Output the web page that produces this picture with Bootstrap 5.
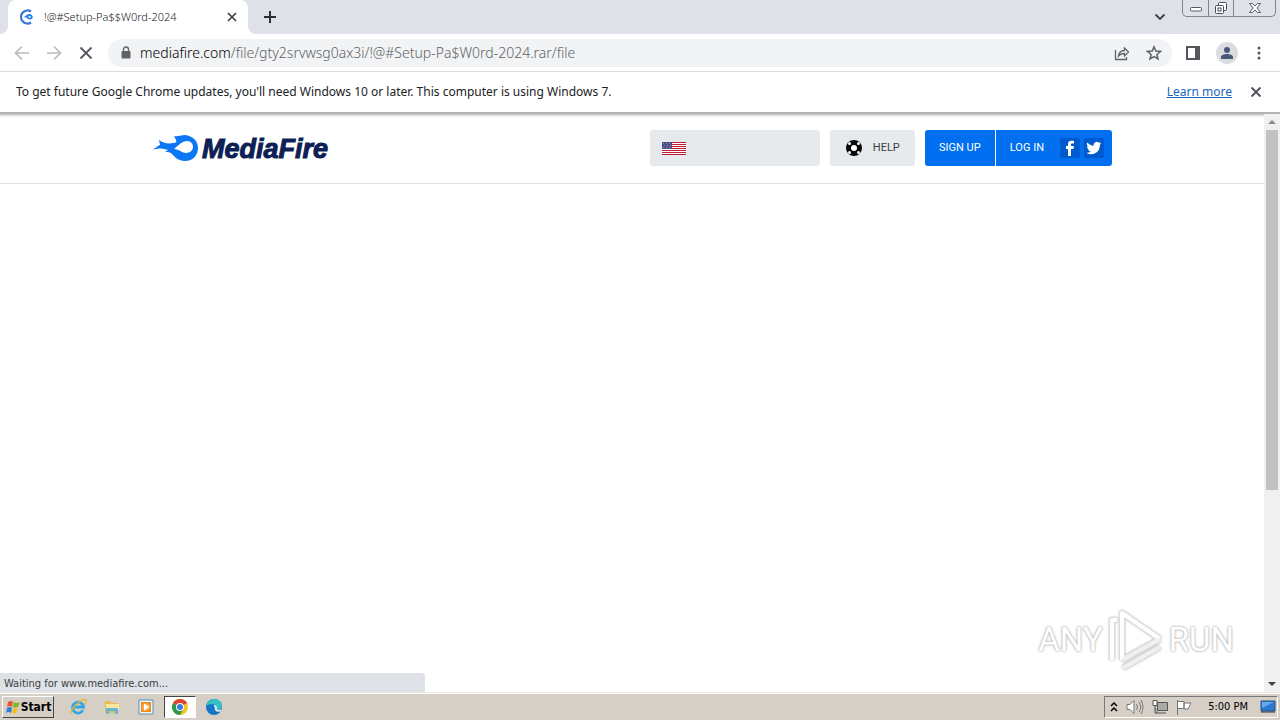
<!DOCTYPE html>
<html lang="en">
<head>
<meta charset="utf-8">
<meta name="viewport" content="width=device-width, initial-scale=1">
<title>!@#Setup-Pa$$W0rd-2024</title>
<link href="https://cdn.jsdelivr.net/npm/bootstrap@5.3.0/dist/css/bootstrap.min.css" rel="stylesheet">
<style>
body{font-family:"DejaVu Sans Condensed","DejaVu Sans",sans-serif;font-size:11px;line-height:16px;color:#202124}
button{border:0;background:none;padding:0;color:#5f6368;display:flex;align-items:center;justify-content:center}
svg{display:block;flex:none}
.tabstrip{height:34px;background:#dee1e8}
.tab-edge{width:8px;background:#fff}
.tab-edge i{display:block;height:100%;background:#dee1e8}
.edge-left i{border-bottom-right-radius:8px}
.edge-right i{border-bottom-left-radius:8px}
.tab-open{width:240px;background:#fff;border-radius:8px 8px 0 0;padding:0 8px 0 12px}
.tab-title{font-family:"Noto Sans",sans-serif;font-weight:300;font-size:11px;padding-left:2px}
.win-ctl{height:17px;border:1px solid #80848c;border-top:0;border-radius:0 0 5px 5px;margin-right:4px}
.win-ctl button{width:25px}
.win-ctl button+button{border-left:1px solid #80848c}
.win-ctl button:last-child{width:42px}
.toolbar{height:38px;border-bottom:1px solid #dadce0}
.omnibox{height:28px;border-radius:14px;background:#f1f3f4;padding:0 10px 0 12px;margin:0 14px 0 12px}
.url,.url-domain{font-family:"Noto Sans",sans-serif;font-weight:300;font-size:14px;line-height:20px}
.url-domain{color:#000}
.url{border:0;background:none;color:#5f6368;padding:0;outline:0;min-width:0}
.avatar{width:22px;height:22px;border-radius:50%;background:#dadce0}
.infobar{height:42px;border-bottom:2px solid #b4b4b4;padding:0 16px;font-family:"Noto Sans",sans-serif;font-size:12px}
.infobar a{color:#1a66b8}
.site-head{border-bottom:1px solid #e1e2e4;padding:16px 0 17px}
.site-wrap{max-width:960px;margin:0 auto}
.wordmark{font-family:"Liberation Sans",sans-serif;font-style:italic;font-weight:700;font-size:27px;line-height:38px;height:36px;color:#0d1f55;-webkit-text-stroke:1px #0d1f55}
.mf-btn{height:36px;font-family:Roboto,sans-serif;font-size:11px;line-height:18px;background:#e7eaec;color:#3c4046;border-radius:3px}
.mf-blue{background:#0070f0;color:#fff}
.lang{width:170px;justify-content:flex-start;padding-left:12px}
.help-btn{width:85px;margin:0 10px;gap:10px}
.signup{width:71px;border-right:1px solid #fff}
.login{padding:0 8px 0 14px}
.social{width:20px;height:20px;background:#0059cd;border-radius:2px}
.page-area{box-shadow:inset 0 3px 3px -2px #aaa}
.scroll-track{width:16px;background:#f1f1f1;padding:0 2px}
.scroll-track button{height:16px;width:12px}
.scroll-thumb{height:66%;background:#c1c1c1}
.status{left:0;bottom:0;width:425px;height:19px;background:#dee1e6;border-radius:0 4px 0 0;padding:3px 4px 0;color:#3c4043}
.brandmark{right:46px;bottom:20px;color:#fff;font-family:Roboto,sans-serif;font-size:33px;line-height:60px;text-shadow:0 0 2px #aaa,0 0 3px #bbb}
.brandmark svg{filter:drop-shadow(0 0 1px #bbb)}
.taskbar{height:28px;background:#d6cfc6;border-top:1px solid #e9e6e1;padding:3px 2px 2px;box-shadow:inset 0 1px #fff}
.start-btn{width:52px;height:22px;background:#d6cfc6;border:1px solid;border-color:#fff #444 #444 #fff;color:#000;font-weight:700;font-size:12px}
.tasks{gap:2px}
.task{width:32px;height:22px}
.task.active{border:1px solid;border-color:#444 #fff #fff #444;background:#fff}
.tray{border:1px solid;border-color:#777 #fff #fff #777;color:#000;height:22px;padding:0 1px 0 5px}
</style>
</head>
<body class="d-flex flex-column vh-100 overflow-hidden bg-white">
<header>
 <div class="tabstrip d-flex">
  <div class="tab-edge edge-left"><i></i></div>
  <div class="tab-open d-flex align-items-center">
   <svg width="14" height="16" viewBox="0 0 14 16"><path d="M11 2.500A6.500 6.500 0 1 0 11 13.500" fill="none" stroke="#3b78d0" stroke-width="2.300"/><path d="M3 8l2-.5c1.500-2 4-3 6-2 3 1.500 2 5-1 5-2 0-2-1-4-2z" fill="#2b83ea"/><path d="M8 8q2-2 3 0-1 1.500-3 0" fill="#fff"/></svg>
   <span class="tab-title ms-2 flex-grow-1">!@#Setup-Pa$$W0rd-2024</span>
   <button type="button" aria-label="Close tab"><svg width="16" height="16" viewBox="0 0 16 16" stroke="#3c4043" stroke-width="1.700"><path d="M4 4l8 8M12 4l-8 8"/></svg></button>
  </div>
  <div class="tab-edge edge-right"><i></i></div>
  <button type="button" class="ms-1" aria-label="New tab"><svg width="20" height="20" viewBox="0 0 20 20" stroke="#2c2f33" stroke-width="2"><path d="M4 10h12M10 4v12"/></svg></button>
  <button type="button" class="ms-auto me-3" aria-label="Search tabs"><svg width="12" height="12" viewBox="0 0 12 12" fill="none" stroke="#3c4043" stroke-width="1.800"><path d="M1.500 3.500L6 8l4.500-4.500"/></svg></button>
  <div class="win-ctl d-flex">
   <button type="button" aria-label="Minimize"><svg width="14" height="8" viewBox="0 0 14 8" fill="#fff" stroke="#555b65"><rect x="1.500" y="3.500" width="11" height="3.500" rx="1"/></svg></button>
   <button type="button" aria-label="Restore"><svg width="14" height="14" viewBox="0 0 14 14" fill="#fff" stroke="#454b55"><rect x="4.500" y="1.500" width="8" height="8" rx="1"/><rect x="1.500" y="4.500" width="8" height="8" rx="1"/><rect x="4" y="7" width="3" height="3"/></svg></button>
   <button type="button" aria-label="Close"><svg width="14" height="12" viewBox="0 0 14 12" fill="#fff" stroke="#555b65"><path d="M1.500 1.500h3L7 4l2.500-2.500h3L9 6l3.500 4.500h-3L7 8l-2.500 2.500h-3L5 6z"/></svg></button>
  </div>
 </div>
 <div class="toolbar d-flex align-items-center">
  <button type="button" class="ms-2 ps-1" aria-label="Back"><svg width="20" height="20" viewBox="0 0 20 20" fill="none" stroke="#b9bbbe" stroke-width="1.700"><path d="M17 10H4M10 3.500L3.500 10l6.500 6.500"/></svg></button>
  <button type="button" class="ms-2 ps-1" aria-label="Forward"><svg width="20" height="20" viewBox="0 0 20 20" fill="none" stroke="#b9bbbe" stroke-width="1.700"><path d="M3 10h13M10 3.500l6.500 6.500-6.500 6.500"/></svg></button>
  <button type="button" class="ms-2 ps-1" aria-label="Stop"><svg width="20" height="20" viewBox="0 0 20 20" fill="none" stroke="#54585d" stroke-width="1.800"><path d="M4.500 4.500l11 11M15.500 4.500l-11 11"/></svg></button>
  <div class="omnibox d-flex align-items-center flex-grow-1">
   <svg width="12" height="14" viewBox="0 0 12 14"><rect x="1.500" y="5" width="9" height="7.500" rx="1" fill="#5f6368"/><path d="M3.500 5V3.500a2.500 2.500 0 0 1 5 0V5" fill="none" stroke="#5f6368" stroke-width="1.400"/></svg>
   <label for="url" class="url-domain ms-2">mediafire.com</label><input id="url" class="url flex-grow-1" type="text" value="/file/gty2srvwsg0ax3i/!@#Setup-Pa$W0rd-2024.rar/file">
   <button type="button" class="me-3" aria-label="Share"><svg width="16" height="16" viewBox="0 0 16 16" fill="none" stroke="#5f6368" stroke-width="1.300"><path d="M1.500 5v9.500h11V12M4.500 11c.5-4 2.500-5.500 6-5.500V3l4 4-4 4V8.500c-3 0-4.500.5-6 2.500z"/></svg></button>
   <button type="button" aria-label="Bookmark"><svg width="16" height="16" viewBox="0 0 16 16" fill="none" stroke="#5f6368" stroke-width="1.500"><path d="M8 1.800l1.800 4.300 4.700.4-3.600 3 1.100 4.500L8 11.600 4 14l1.100-4.500-3.600-3 4.700-.4z"/></svg></button>
  </div>
  <button type="button" aria-label="Side panel"><svg width="14" height="14" viewBox="0 0 14 14"><rect x="1" y="1" width="12" height="12" fill="none" stroke="#54585d" stroke-width="2"/><path d="M9 1h4v12H9z" fill="#54585d"/></svg></button>
  <button type="button" class="avatar mx-3" aria-label="Profile"><svg width="14" height="14" viewBox="0 0 14 14" fill="#4a5878"><circle cx="7" cy="4" r="3"/><path d="M1 13v-2c0-2 3-3 6-3s6 1 6 3v2z"/></svg></button>
  <button type="button" class="me-3" aria-label="Menu"><svg width="10" height="16" viewBox="0 0 10 16" fill="#54585d"><circle cx="5" cy="3" r="1.500"/><circle cx="5" cy="8" r="1.500"/><circle cx="5" cy="13" r="1.500"/></svg></button>
 </div>
 <div class="infobar d-flex align-items-center">
  <span class="flex-grow-1">To get future Google Chrome updates, you'll need Windows 10 or later. This computer is using Windows 7.</span>
  <a href="#">Learn more</a>
  <button type="button" class="ms-3" aria-label="Dismiss"><svg width="16" height="16" viewBox="0 0 16 16" stroke="#54585d" stroke-width="2"><path d="M3.500 3.500l9 9M12.500 3.500l-9 9"/></svg></button>
 </div>
</header>
<div class="page-area d-flex flex-grow-1 position-relative">
 <main class="flex-grow-1">
  <div class="site-head">
   <div class="site-wrap d-flex align-items-center">
    <a href="#" class="d-flex align-items-center text-decoration-none me-auto" aria-label="MediaFire home">
     <svg width="46" height="26" viewBox="0 0 46 26"><path d="M0 15C4 13 5 11 8 10L7 5c4 3 9 4 14 3 3 0 4-1 3-3L22 1c3 1 7-1 11-1 8 1 13 6 13 13s-5 13-13 13c-7 0-10-4-13-7-2-2-4-2-7-2l3-2c-5-2-10-2-16 0z" fill="#0c77f5"/><path d="M22 14c5-4 8-8 13-8 4 0 6 3 6 6s-3 6-7 6c-4 0-7-4-12-4z" fill="#fff"/></svg>
     <span class="wordmark ms-1">MediaFire</span>
    </a>
    <button type="button" class="mf-btn lang" aria-label="Language"><svg width="24" height="13" viewBox="0 0 24 13" shape-rendering="crispEdges"><path fill="#fff" d="M0 0h24v13H0z"/><path d="M0 0h24v1H0zM0 2h24v1H0zM0 4h24v1H0zM0 6h24v1H0zM0 8h24v1H0zM0 10h24v1H0zM0 12h24v1H0z" fill="#bf1f35"/><path fill="#4a4e82" d="M0 0h10v7H0z"/><path d="M1 1h1v1H1zM4 1h1v1H4zM7 1h1v1H7zM2 3h1v1H2zM5 3h1v1H5zM8 3h1v1H8zM1 5h1v1H1zM4 5h1v1H4zM7 5h1v1H7z" fill="#8f92ba"/></svg></button>
    <button type="button" class="mf-btn help-btn"><svg width="18" height="18" viewBox="0 0 18 18"><circle cx="9" cy="9" r="8" fill="#080808"/><circle cx="9" cy="9" r="3" fill="#fff"/><g fill="#fff"><circle cx="4.500" cy="4.500" r="1.500"/><circle cx="13.500" cy="4.500" r="1.500"/><circle cx="4.500" cy="13.500" r="1.500"/><circle cx="13.500" cy="13.500" r="1.500"/></g></svg><span>HELP</span></button>
    <div class="d-flex">
     <button type="button" class="mf-btn mf-blue rounded-end-0 signup">SIGN UP</button>
     <div class="mf-btn mf-blue rounded-start-0 d-flex align-items-center login">
      <button type="button" class="text-white me-3">LOG IN</button>
      <button type="button" class="social me-1" aria-label="Log in with Facebook"><svg width="18" height="18" viewBox="0 0 18 18" fill="#fff"><path d="M7 17V10H5V7h2V5c0-3 2-4 6-3v2.500c-2-.3-3 0-3 1.500v1h3l-.5 3H10v7z"/></svg></button>
      <button type="button" class="social" aria-label="Log in with Twitter"><svg width="16" height="16" viewBox="0 0 24 24" fill="#fff"><path d="M23 5c-.8.400-1.700.600-2.600.700 1-.6 1.600-1.400 2-2.500-.9.500-1.900.9-2.900 1.100a4.600 4.600 0 0 0-7.900 4.200C7.800 8.300 4.400 6.500 2 3.700a4.600 4.600 0 0 0 1.400 6.100c-.8 0-1.500-.2-2.100-.6 0 2.300 1.600 4.200 3.700 4.600-.7.200-1.400.2-2.100.1.600 1.800 2.300 3.100 4.300 3.200A9.200 9.200 0 0 1 .500 19 13 13 0 0 0 20.700 7.300C21.600 6.700 22.400 5.900 23 5z"/></svg></button>
     </div>
    </div>
   </div>
  </div>
 </main>
 <div class="scroll-track d-flex flex-column">
  <button type="button" aria-label="Scroll up"><svg width="8" height="4" viewBox="0 0 8 4" fill="#8b8b8b"><path d="M0 4l4-4 4 4z"/></svg></button>
  <div class="flex-grow-1"><div class="scroll-thumb"></div></div>
  <button type="button" aria-label="Scroll down"><svg width="8" height="4" viewBox="0 0 8 4" fill="#404040"><path d="M0 0l4 4 4-4z"/></svg></button>
 </div>
 <div class="status position-absolute">Waiting for www.mediafire.com...</div>
 <div class="brandmark position-absolute d-flex align-items-center">
  <span>ANY</span>
  <svg class="mx-1" width="58" height="64" viewBox="0 0 58 64" fill="none"><g stroke="#dcdcdc" stroke-width="6" stroke-linejoin="round"><path d="M15 52V5l38 26M5 52V12h5M15 52l38-21M16 60l37-21"/></g><g stroke="#fff" stroke-width="4" stroke-linejoin="round"><path d="M15 52V5l38 26M5 52V12h5"/></g><path d="M15 52l38-21M16 60l37-21" stroke="#f0f0f0" stroke-width="4"/></svg>
  <span>RUN</span>
 </div>
</div>
<footer class="taskbar d-flex align-items-center">
 <button type="button" class="start-btn"><svg width="16" height="16" viewBox="0 0 16 16"><path d="M3 3q3-2 5 0L7 8Q4 6 2 8z" fill="#e8562a"/><path d="M9 3q3 2 6 0l-2 5q-3 1-5 0z" fill="#78b82a"/><path d="M2 9q3-2 5 0l-1 5q-3-2-5 0z" fill="#2f80d8"/><path d="M8 9q3 1 5 0l-2 5q-2 1-4 0z" fill="#f6bc20"/></svg>Start</button>
 <div class="tasks d-flex ms-2">
 <button type="button" class="task" aria-label="Internet Explorer"><svg width="18" height="18" viewBox="0 0 18 18" fill="none"><path d="M14 12a5.500 5.500 0 1 1 .5-3H5" stroke="#33a5e5" stroke-width="2.800"/><path d="M2 16C-1 13 14-1 17 2q1 1-1 4" stroke="#e9b72f" stroke-width="1.300"/></svg></button>
 <button type="button" class="task" aria-label="Explorer"><svg width="18" height="18" viewBox="0 0 18 18"><path d="M2 3h5l1 2h7v10H2z" fill="#e5bd4f"/><path d="M3 6h13v6H3z" fill="#fae79c"/><path d="M3 16v-5q0-1 1-1h10q1 0 1 1v5h-3v-3H6v3z" fill="#66b6dc"/></svg></button>
 <button type="button" class="task" aria-label="Media Player"><svg width="18" height="18" viewBox="0 0 18 18"><path d="M2 2h14v14H2z" fill="#eef5fa" stroke="#4f94c2"/><path d="M4 4h10v10H4z" fill="#f08a17"/><circle cx="9" cy="9" r="4" fill="#f7a83f"/><path d="M7 5.500L12.500 9 7 12.500z" fill="#fff"/></svg></button>
 <button type="button" class="task active" aria-label="Chrome"><svg width="18" height="18" viewBox="0 0 18 18"><circle cx="9" cy="9" r="8" fill="#f7c51f"/><path d="M9 9L2.070 5A8 8 0 0 1 15.930 5z" fill="#df4030"/><path d="M9 9L2.070 5A8 8 0 0 0 9 17l3.500-6z" fill="#2c9b4c"/><path d="M9 5h6.930L14 3H8z" fill="#df4030"/><circle cx="9" cy="9" r="4" fill="#fff"/><circle cx="9" cy="9" r="3" fill="#397de3"/></svg></button>
 <button type="button" class="task" aria-label="Edge"><svg width="18" height="18" viewBox="0 0 18 18"><circle cx="9" cy="9" r="8" fill="#1374c8"/><path d="M1.500 8C2 3 6 1 9 1c5 0 8 3 8 7 0 3-3 4-6 3 1-1 1-4-2-4.500C6 6 3 6 1.500 8z" fill="#35c1c4"/><path d="M9 8q2 0 2 2c-1 2 2 4 5 2" fill="none" stroke="#d6e9ee" stroke-width="2"/></svg></button>
 </div>
 <div class="tray ms-auto d-flex align-items-center gap-2">
  <svg width="8" height="12" viewBox="0 0 8 12" fill="none" stroke="#000" stroke-width="1.500"><path d="M1 5l3-3 3 3M1 10l3-3 3 3"/></svg>
  <svg width="18" height="16" viewBox="0 0 18 16" fill="#fff" stroke="#777"><path d="M1 5.500h3l4-4v13l-4-4H1z"/><path d="M10.500 5q2 3 0 6M13 3q3.500 5 0 10M15 1q4 7 0 14" fill="none"/></svg>
  <svg width="16" height="16" viewBox="0 0 16 16" fill="#aaa" stroke="#555"><path d="M5.500 3.500h10v8h-10zM7 14h7M3 7v7h4"/><path d="M1 1.500h4v5H1z" fill="#fff"/></svg>
  <svg width="16" height="16" viewBox="0 0 16 16" fill="#fff" stroke="#777"><path d="M1.500 1v15M2 2.500h6v7H2M8 4h7l-3 6H8z"/></svg>
  <span class="ms-2 me-1">5:00 PM</span>
  <svg width="16" height="14" viewBox="0 0 16 14"><path d="M1 1h14v10H1z" fill="#2f78cf" stroke="#23558c"/><path d="M2 2h12L2 8z" fill="#65a9eb"/><path d="M1 12h14" stroke="#333"/></svg>
 </div>
</footer>
<script src="https://cdn.jsdelivr.net/npm/bootstrap@5.3.0/dist/js/bootstrap.bundle.min.js"></script>
</body>
</html>
